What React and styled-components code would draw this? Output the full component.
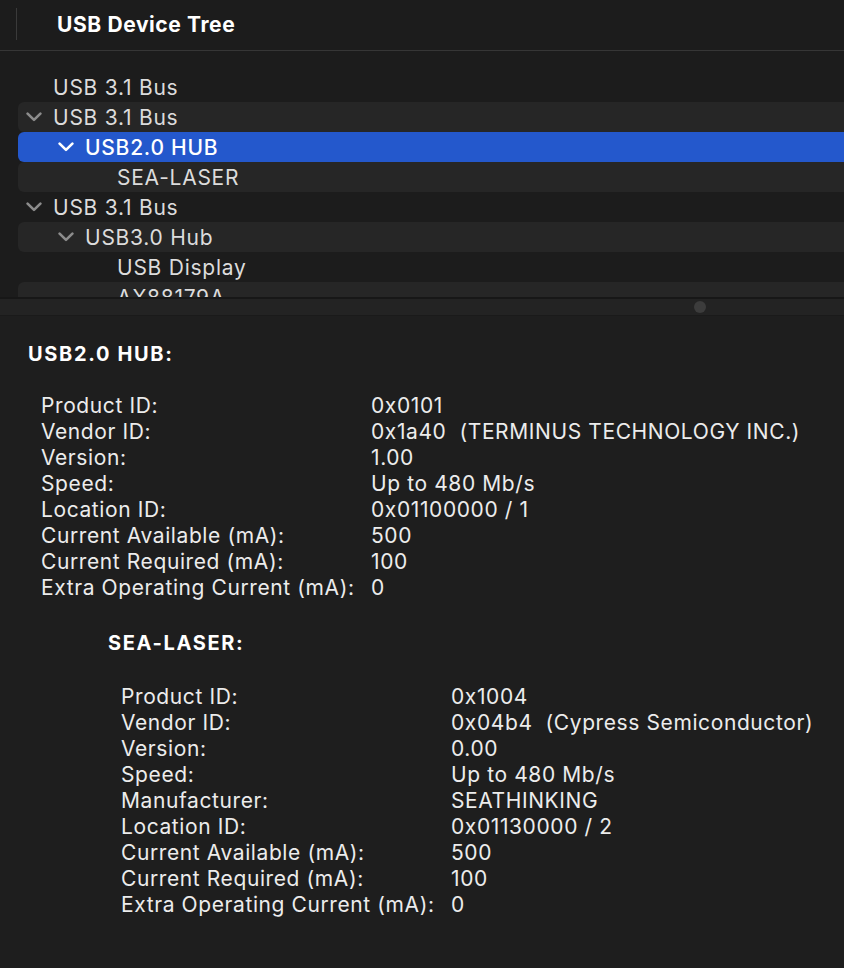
import React from "react";
import styled, { createGlobalStyle } from "styled-components";

const GlobalStyle = createGlobalStyle`
  html, body {
    margin: 0;
    padding: 0;
    background: #1e1e1e;
    font-family: Inter, "Noto Sans", "Liberation Sans", sans-serif;
    -webkit-font-smoothing: antialiased;
  }
`;

const tree = [
  { label: "USB 3.1 Bus", level: 0 },
  { label: "USB 3.1 Bus", level: 0, open: true },
  { label: "USB2.0 HUB", level: 1, open: true, selected: true },
  { label: "SEA-LASER", level: 2 },
  { label: "USB 3.1 Bus", level: 0, open: true },
  { label: "USB3.0 Hub", level: 1, open: true },
  { label: "USB Display", level: 2 },
  { label: "AX88179A", level: 2 },
];

const hub = {
  title: "USB2.0 HUB:",
  props: [
    ["Product ID:", "0x0101"],
    ["Vendor ID:", "0x1a40  (TERMINUS TECHNOLOGY INC.)"],
    ["Version:", "1.00"],
    ["Speed:", "Up to 480 Mb/s"],
    ["Location ID:", "0x01100000 / 1"],
    ["Current Available (mA):", "500"],
    ["Current Required (mA):", "100"],
    ["Extra Operating Current (mA):", "0"],
  ],
  child: {
    title: "SEA-LASER:",
    props: [
      ["Product ID:", "0x1004"],
      ["Vendor ID:", "0x04b4  (Cypress Semiconductor)"],
      ["Version:", "0.00"],
      ["Speed:", "Up to 480 Mb/s"],
      ["Manufacturer:", "SEATHINKING"],
      ["Location ID:", "0x01130000 / 2"],
      ["Current Available (mA):", "500"],
      ["Current Required (mA):", "100"],
      ["Extra Operating Current (mA):", "0"],
    ],
  },
};

const Window = styled.div`
  width: 844px;
  height: 968px;
  overflow: hidden;
  display: flex;
  flex-direction: column;
  background: #1e1e1e;
`;

const Header = styled.div`
  height: 50px;
  flex-shrink: 0;
  display: flex;
  align-items: center;
  background: #1c1c1c;
  border-bottom: 1px solid #363636;
`;

const Divider = styled.div`
  width: 1px;
  height: 32px;
  margin: 8px 40px 0 16px;
  align-self: flex-start;
  background: #3a3a3a;
`;

const Title = styled.h1`
  margin: 0 0 2px;
  font-size: 21px;
  font-weight: 700;
  color: #ffffff;
  letter-spacing: 0.6px;
`;

const TreePane = styled.div`
  height: 246px;
  flex-shrink: 0;
  overflow: hidden;
  background: #1c1c1c;
  padding-top: 21px;
  box-sizing: border-box;
`;

const Row = styled.div`
  height: 30px;
  margin-left: 18px;
  margin-right: -20px;
  display: flex;
  align-items: center;
  border-radius: 6px;
  padding-left: ${(p) => 8 + p.$level * 32}px;
  background: ${(p) => (p.$selected ? "#2458cc" : p.$alt ? "#262626" : "transparent")};
  color: ${(p) => (p.$selected ? "#ffffff" : "#dcdcdc")};
  font-size: 21px;
  letter-spacing: 0.75px;
  font-weight: ${(p) => (p.$selected ? 500 : 400)};
`;

const Chevron = styled.span`
  width: 27px;
  display: inline-flex;
  align-items: center;
  flex-shrink: 0;
`;

const Splitter = styled.div`
  height: 16px;
  flex-shrink: 0;
  border-top: 2px solid #171717;
  border-bottom: 1px solid #1a1a1a;
  background: #232323;
  display: flex;
  align-items: center;
  padding-left: 694px;
`;

const Knob = styled.div`
  width: 12px;
  height: 12px;
  border-radius: 50%;
  background: #3c3c3c;
`;

const Detail = styled.div`
  flex: 1;
  padding: 25px 0 0 28px;
  background: #1e1e1e;
`;

const Section = styled.section`
  margin-left: ${(p) => (p.$nested ? 80 : 0)}px;
  margin-top: ${(p) => (p.$nested ? 29 : 0)}px;
`;

const SectionTitle = styled.h2`
  margin: 0;
  font-size: 20px;
  line-height: 26px;
  font-weight: 700;
  letter-spacing: 1.65px;
  color: #ffffff;
`;

const Props = styled.div`
  display: grid;
  grid-template-columns: 330px auto;
  margin: ${(p) => (p.$nested ? 28 : 26)}px 0 0 13px;
  font-size: 21px;
  line-height: 26px;
  letter-spacing: 0.6px;
  color: #ececec;
  white-space: pre;
`;

function ChevronIcon({ color }) {
  return (
    <svg width="16" height="10" viewBox="0 0 16 10">
      <path d="M1.6 1.6 L8 7.9 L14.4 1.6" fill="none" stroke={color} strokeWidth="2.6" strokeLinecap="round" strokeLinejoin="round" />
    </svg>
  );
}

function DeviceSection({ data, nested }) {
  return (
    <Section $nested={nested}>
      <SectionTitle>{data.title}</SectionTitle>
      <Props $nested={nested}>
        {data.props.map(([k, v], i) => (
          <React.Fragment key={i}>
            <span>{k}</span>
            <span>{v}</span>
          </React.Fragment>
        ))}
      </Props>
      {data.child && <DeviceSection data={data.child} nested />}
    </Section>
  );
}

export default function App() {
  return (
    <Window>
      <GlobalStyle />
      <Header>
        <Divider />
        <Title>USB Device Tree</Title>
      </Header>
      <TreePane>
        {tree.map((n, i) => (
          <Row key={i} $level={n.level} $alt={i % 2 === 1} $selected={n.selected}>
            <Chevron>{n.open && <ChevronIcon color={n.selected ? "#ffffff" : "#8c8c8c"} />}</Chevron>
            {n.label}
          </Row>
        ))}
      </TreePane>
      <Splitter>
        <Knob />
      </Splitter>
      <Detail>
        <DeviceSection data={hub} />
      </Detail>
    </Window>
  );
}
